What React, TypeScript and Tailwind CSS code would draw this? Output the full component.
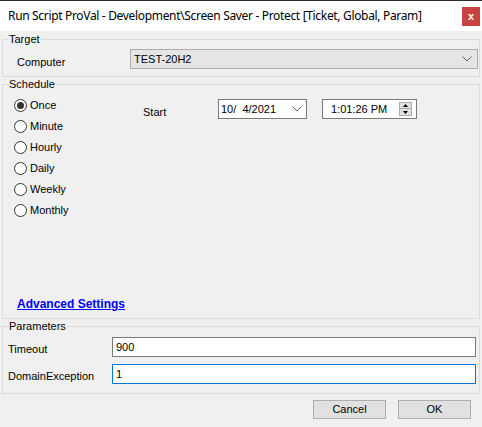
import React from "react";

const Chevron = () => (
  <svg width="10" height="6" viewBox="0 0 10 6" className="block">
    <path d="M0.5 0.5 L5 5 L9.5 0.5" fill="none" stroke="#606060" strokeWidth="1" />
  </svg>
);

const Radio = ({ label, checked }: { label: string; checked?: boolean }) => (
  <div className="flex h-[21px] items-center">
    <div className="flex h-[13px] w-[13px] items-center justify-center rounded-full border border-[#333333] bg-white">
      {checked && <div className="h-[7px] w-[7px] rounded-full bg-[#333333]" />}
    </div>
    <span className="ml-[3px]">{label}</span>
  </div>
);

const Group = ({
  title,
  className,
  children,
}: {
  title: string;
  className?: string;
  children: React.ReactNode;
}) => (
  <div className={"relative mx-[2px] border border-[#dcdcdc] " + (className ?? "")}>
    <span className="absolute left-[5px] top-[-8px] bg-[#f0f0f0] px-[1px] leading-[14px] text-[#000]">
      {title}
    </span>
    {children}
  </div>
);

export default function App() {
  return (
    <div
      className="flex h-[427px] w-[482px] flex-col overflow-hidden bg-[#f0f0f0] text-[11px] text-black"
      style={{ fontFamily: '"Liberation Sans", Arial, sans-serif' }}
    >
      {/* Title bar */}
      <div className="flex h-[31px] shrink-0 items-center justify-between border-t border-[#2b2b2b] bg-white pl-[8px]">
        <span className="text-[12px] tracking-[-0.33px] text-black" style={{ fontFamily: '"Noto Sans", sans-serif' }}>
          Run Script ProVal - Development\Screen Saver - Protect [Ticket, Global, Param]
        </span>
        <div className="mr-[2px] flex h-[19px] w-[18px] items-center justify-center bg-[#c9423f] text-[11px] font-bold leading-none text-white">
          x
        </div>
      </div>

      {/* Target */}
      <Group title="Target" className="mt-[8px] pb-[7px] pl-[14px] pr-[1px] pt-[9px]">
        <div className="flex items-center">
          <span className="flex h-[20px] w-[113px] items-center pt-[6px]">Computer</span>
          <div className="flex h-[20px] flex-1 items-center justify-between border border-[#adadad] bg-[#e5e5e5] pl-[3px] pr-[5px]">
            <span>TEST-20H2</span>
            <Chevron />
          </div>
        </div>
      </Group>

      {/* Schedule */}
      <Group title="Schedule" className="mt-[7px] flex h-[235px] flex-col justify-between pb-[5px] pl-[11px] pt-[10px]">
        <div className="flex">
          <div className="flex w-[129px] flex-col">
            <Radio label="Once" checked />
            <Radio label="Minute" />
            <Radio label="Hourly" />
            <Radio label="Daily" />
            <Radio label="Weekly" />
            <Radio label="Monthly" />
          </div>
          <div className="flex items-start pt-[4px]">
            <span className="flex h-[20px] w-[75px] items-center pt-[6px]">Start</span>
            <div className="flex h-[20px] w-[89px] items-center justify-between border border-[#7a7a7a] bg-white pl-[2px] pr-[4px]">
              <span className="whitespace-pre">10/  4/2021</span>
              <Chevron />
            </div>
            <div className="ml-[15px] flex h-[20px] w-[95px] items-center justify-between border border-[#7a7a7a] bg-white pl-[8px] pr-[4px]">
              <span>1:01:26 PM</span>
              <div className="flex flex-col">
                <div className="flex h-[7px] w-[13px] items-center justify-center border border-[#adadad] bg-[#e1e1e1]">
                  <svg width="5" height="3" viewBox="0 0 5 3"><path d="M0 3 L2.5 0 L5 3 Z" fill="#000" /></svg>
                </div>
                <div className="flex h-[7px] w-[13px] items-center justify-center border border-t-0 border-[#adadad] bg-[#e1e1e1]">
                  <svg width="5" height="3" viewBox="0 0 5 3"><path d="M0 0 L2.5 3 L5 0 Z" fill="#000" /></svg>
                </div>
              </div>
            </div>
          </div>
        </div>
        <div className="pl-[3px]">
          <span className="text-[12px] font-bold text-[#0000ff] underline">Advanced Settings</span>
        </div>
      </Group>

      {/* Parameters */}
      <Group title="Parameters" className="mt-[7px] flex flex-col gap-[7px] pb-[9px] pl-[5px] pr-[3px] pt-[10px]">
        <div className="flex items-center">
          <span className="flex h-[20px] w-[104px] items-center pt-[4px]">Timeout</span>
          <div className="flex h-[20px] flex-1 items-center border border-[#7a7a7a] bg-white pl-[3px]">900</div>
        </div>
        <div className="flex items-center">
          <span className="flex h-[20px] w-[104px] items-center pt-[4px]">DomainException</span>
          <div className="flex h-[20px] flex-1 items-center border border-[#0078d7] bg-white pl-[3px]">1</div>
        </div>
      </Group>

      {/* Buttons */}
      <div className="mt-[6px] flex justify-end gap-[12px] pr-[11px]">
        <div className="flex h-[19px] w-[73px] items-center justify-center border border-[#adadad] bg-[#e1e1e1]">Cancel</div>
        <div className="flex h-[19px] w-[73px] items-center justify-center border border-[#adadad] bg-[#e1e1e1]">OK</div>
      </div>
    </div>
  );
}
